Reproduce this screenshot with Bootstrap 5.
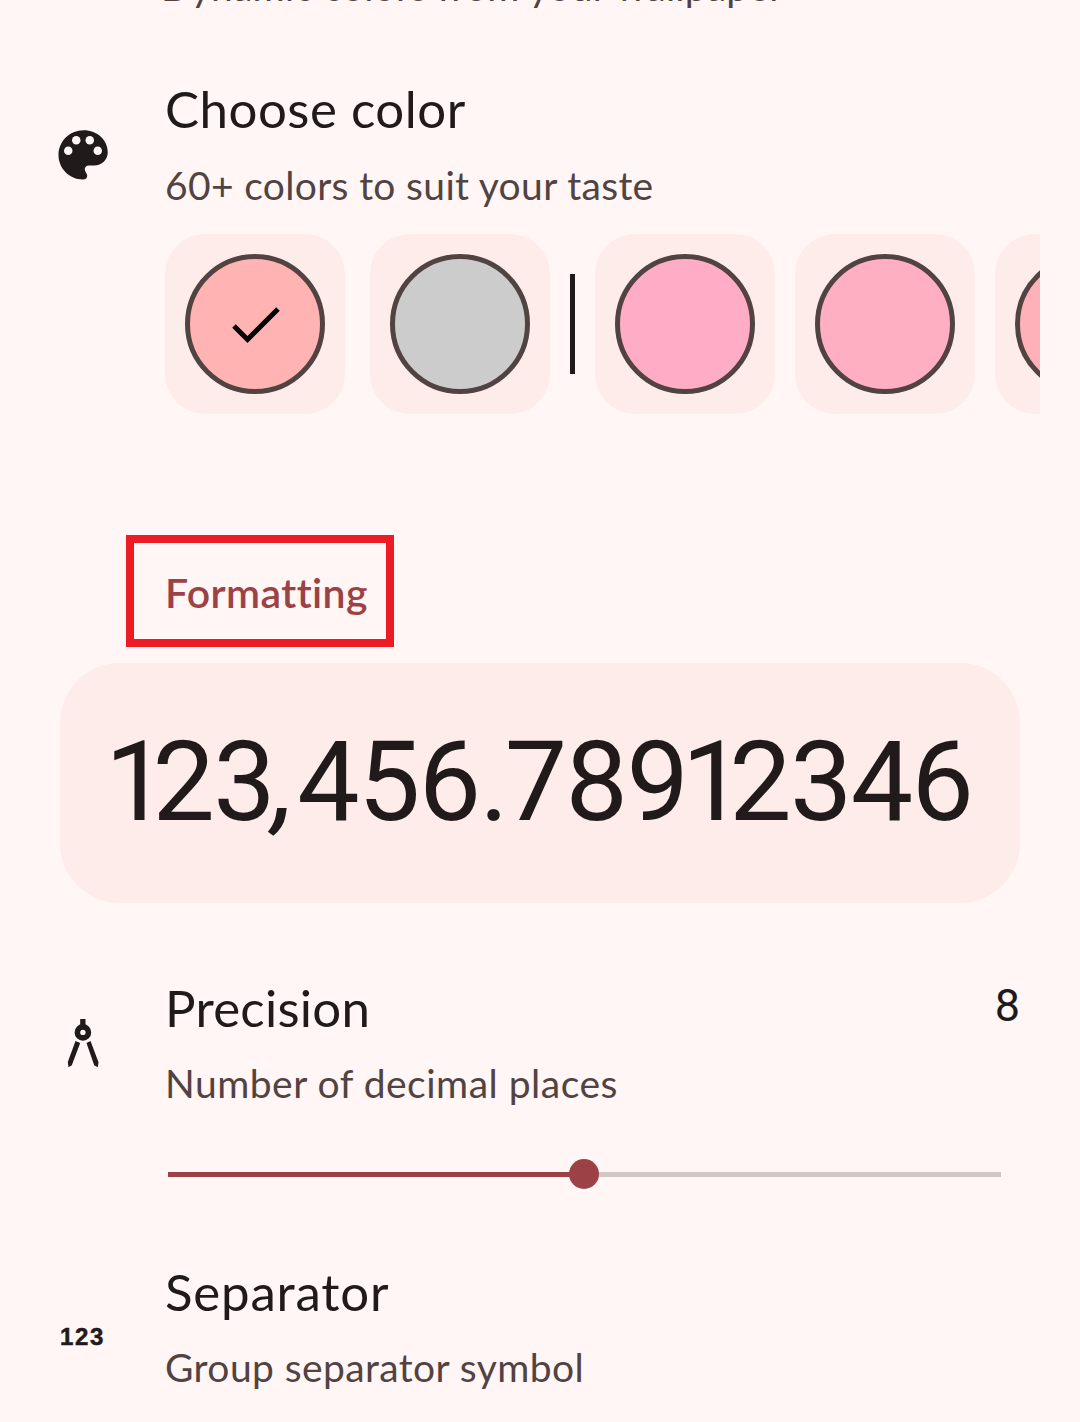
<!DOCTYPE html>
<html lang="en">
<head>
<meta charset="utf-8">
<meta name="viewport" content="width=device-width, initial-scale=1">
<title>Settings</title>
<link href="https://cdn.jsdelivr.net/npm/bootstrap@5.3.0/dist/css/bootstrap.min.css" rel="stylesheet">
<style>
body{background:#fff6f5;color:#201a1a;font-family:Lato,"Open Sans",sans-serif;height:1422px;overflow:hidden}
.screen{width:1080px;height:1422px}
.clip-row{height:11px;padding-left:161px}
.icon-col{width:165px;padding-left:52.5px}
.icon-col svg{display:block;width:60px;height:60px}
.title{font-size:51px;line-height:64px;white-space:nowrap;letter-spacing:.5px}
.sub{font-size:39px;line-height:50px;color:#524343;margin-top:18px;white-space:nowrap;letter-spacing:.4px}
.clip-row .sub{margin:0;letter-spacing:.2px}
.pick{margin-top:66px}
.pick .sub{margin-top:19px;letter-spacing:.33px}
.pick .icon-col{padding-top:47.5px}
.swatches{margin-top:24px;width:875px;height:180px}
.swatch{width:180px;height:180px;border-radius:40px;background:#feecea;padding:20px;margin-right:20px}
.swatch.wide-gap{margin-right:25px}
.dot{width:140px;height:140px;border:5px solid #524343}
.bar{width:5px;height:100px;background:#201a1a;margin-right:20px}
.mark-box{width:268px;height:112px;border:8px solid #ed1c24;margin:121px 0 0 126px;padding:3px 0 0 31px}
.head{font-size:41px;font-weight:600;color:#9c4146;line-height:50px;letter-spacing:.4px}
.preview{margin:16px 60px 0;height:240px;border-radius:60px;background:#feecea;padding:0 0 3px 45px}
.num{font-family:Roboto,sans-serif;font-size:111px;line-height:132px;white-space:nowrap;letter-spacing:-1.6px}
.one{letter-spacing:-15px}
.nine{letter-spacing:-7px}
.comma{font-style:italic;letter-spacing:2px}
.point{letter-spacing:-4px}
.precision{margin-top:73px}
.precision .title{letter-spacing:.25px}
.precision .sub{letter-spacing:.5px}
.precision .icon-col{padding-top:36.5px}
.val{font-family:Roboto,sans-serif;font-size:45px;line-height:54px;margin:3px 60px 0 0}
.slider{margin:51px 79.5px 0 168px;height:30px}
.fill{height:5px;background:#9c4146}
.thumb{width:30px;height:30px;background:#9c4146;margin:0 -15px;z-index:1}
.rest{height:5px;background:#cfc8c7}
.sep{margin-top:71px}
.sep .title{letter-spacing:.8px}
.sep .icon-col{padding:62.5px 0 0 60px}
.num-icon{font:700 24px/28px "Liberation Sans",sans-serif;letter-spacing:1.6px;-webkit-text-stroke:.5px #201a1a}
</style>
<script src="https://cdn.jsdelivr.net/npm/bootstrap@5.3.0/dist/js/bootstrap.bundle.min.js"></script>
</head>
<body>
<main class="screen overflow-hidden">
  <div class="clip-row d-flex align-items-end overflow-hidden"><div class="sub">Dynamic colors from your wallpaper</div></div>

  <section class="pick d-flex">
    <div class="icon-col flex-shrink-0">
      <svg viewBox="0 0 24 24"><path fill="#201a1a" d="M12 21.8C6.6 21.8 2.2 17.4 2.2 12S6.6 2.1 12.2 2.1s9.7 3.9 9.7 8.8c0 3-2.4 5.3-5.4 5.3h-2.2c-1 0-1.6.7-1.6 1.5 0 .9.9 1.6 1 2.6 0 .9-.7 1.5-1.7 1.5z"/><g fill="#fff6f5"><circle cx="6.1" cy="10.3" r="1.7"/><circle cx="9.3" cy="6.1" r="1.7"/><circle cx="14.7" cy="6.1" r="1.7"/><circle cx="17.9" cy="10.3" r="1.7"/></g></svg>
    </div>
    <div>
      <div class="title">Choose color</div>
      <div class="sub">60+ colors to suit your taste</div>
      <div class="swatches d-flex align-items-center overflow-hidden">
        <div class="swatch wide-gap flex-shrink-0"><div class="dot rounded-circle d-flex align-items-center justify-content-center" style="background:#ffb3b2"><svg width="60" height="60" viewBox="0 0 60 60"><path d="M9 32 22.500 45.500 53 15" fill="none" stroke="#000" stroke-width="5"/></svg></div></div>
        <div class="swatch flex-shrink-0"><div class="dot rounded-circle" style="background:#ccc"></div></div>
        <div class="bar flex-shrink-0"></div>
        <div class="swatch flex-shrink-0"><div class="dot rounded-circle" style="background:#ffadc7"></div></div>
        <div class="swatch flex-shrink-0"><div class="dot rounded-circle" style="background:#ffafc1"></div></div>
        <div class="swatch flex-shrink-0"><div class="dot rounded-circle" style="background:#ffb1ba"></div></div>
      </div>
    </div>
  </section>

  <div class="mark-box d-flex align-items-center"><span class="head">Formatting</span></div>

  <div class="preview d-flex align-items-center"><span class="num"><span class="one">1</span>23<span class="comma">,</span>456<span class="point">.</span>78<span class="nine">9</span><span class="one">1</span>2346</span></div>

  <section class="precision d-flex">
    <div class="icon-col flex-shrink-0">
      <svg viewBox="0 0 60 60" fill="#201a1a"><path d="M27.2 6h5.300v7h-5.300z"/><circle cx="29.900" cy="19.400" r="5.500" fill="none" stroke="#201a1a" stroke-width="5.600"/><path d="M22.500 28l4.700 2-8.400 22.300-3.300 2-.7-5.300zM37.500 28l-4 2 7.700 22.300 3.600 2 .7-5z"/></svg>
    </div>
    <div class="flex-grow-1">
      <div class="title">Precision</div>
      <div class="sub">Number of decimal places</div>
    </div>
    <div class="val">8</div>
  </section>
  <div class="slider d-flex align-items-center">
    <div class="fill" style="width:50%"></div><div class="thumb rounded-circle flex-shrink-0"></div><div class="rest flex-grow-1"></div>
  </div>

  <section class="sep d-flex">
    <div class="icon-col flex-shrink-0"><div class="num-icon">123</div></div>
    <div>
      <div class="title">Separator</div>
      <div class="sub">Group separator symbol</div>
    </div>
  </section>
</main>
</body>
</html>
